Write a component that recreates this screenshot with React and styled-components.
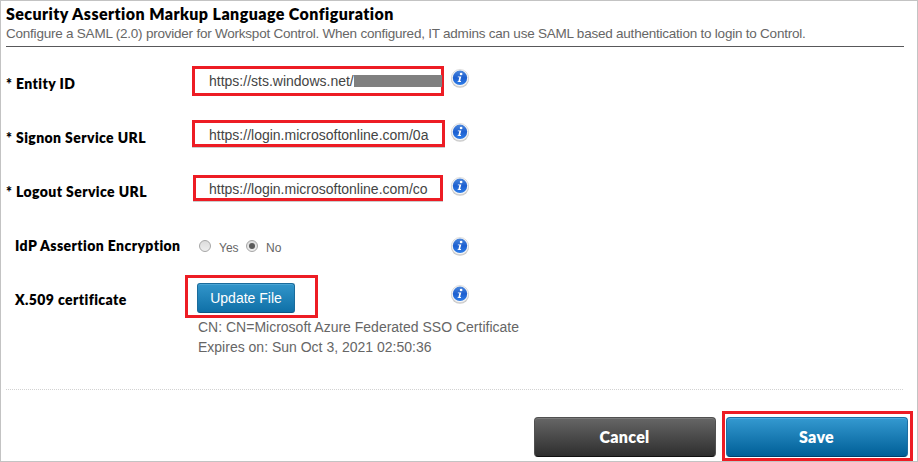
import React from "react";
import styled, { createGlobalStyle, css } from "styled-components";

const GlobalStyle = createGlobalStyle`
  * { box-sizing: border-box; }
  body { margin: 0; background: #fff; }
`;

const heading = css`
  font-family: Lato, "Open Sans", sans-serif;
  font-weight: 800;
  color: #000;
  white-space: nowrap;
`;
const body = css`
  font-family: "Liberation Sans", Arial, sans-serif;
  white-space: nowrap;
`;

const Panel = styled.main`
  width: 918px;
  height: 462px;
  border: 1px solid #c3c3c3;
  padding-left: 5px;
  overflow: hidden;
  background: #fff;
`;
const Header = styled.header`
  width: 898px;
  height: 46px;
  padding-top: 3px;
  border-bottom: 1px solid #58585a;
`;
const Title = styled.h1`
  ${heading}
  margin: 0;
  font-size: 16px;
  line-height: 20px;
  letter-spacing: 0.42px;
`;
const Subtitle = styled.p`
  ${body}
  margin: 0;
  font-size: 13.5px;
  line-height: 19px;
  letter-spacing: -0.225px;
  color: #666;
`;
const Form = styled.form`
  padding-top: 9px;
  height: 342px;
`;
const Row = styled.div`
  display: grid;
  grid-template-columns: 179px 265px 20px;
  height: ${(p) => p.$height || 54}px;
`;
const Label = styled.label`
  ${heading}
  font-size: 14px;
  line-height: 54px;
  padding-top: 1px;
  letter-spacing: 0.4px;
  padding-left: ${(p) => (p.$indent ? 9 : 0)}px;
`;
const InfoCell = styled.div`
  padding-top: ${(p) => p.$top}px;
  height: 40px;
`;
const Highlight = styled.div`
  border: 3px solid #ed1c24;
  width: ${(p) => p.$width}px;
  height: ${(p) => p.$height}px;
  margin: ${(p) => p.$top}px 0 0 ${(p) => p.$left}px;
`;
const Value = styled(Highlight)`
  ${body}
  display: flex;
  align-items: center;
  font-size: 14px;
  line-height: 20px;
  color: #444;
  padding-top: ${(p) => (p.$shadow ? 2 : 0)}px;
  padding-left: ${(p) => 14 - (p.$left - 7)}px;
  box-shadow: ${(p) => (p.$shadow ? "0 1px 0 #ccc" : "none")};
`;
const Redacted = styled.span`
  flex: 1;
  height: 12px;
  margin-right: -1px;
  background: #808080;
`;
const Radios = styled.div`
  ${body}
  display: flex;
  align-items: center;
  height: 56px;
  padding-left: 14px;
  font-size: 12px;
  color: #666;
`;
const Radio = styled.span`
  display: flex;
  align-items: center;
  justify-content: center;
  width: 12px;
  height: 12px;
  border: 1px solid #a6a6a6;
  border-radius: 50%;
  background: linear-gradient(#dcdcdc, #eee);
  &::after {
    content: "";
    width: 6px;
    height: 6px;
    border-radius: 50%;
    background: ${(p) => (p.$on ? "#5a5a5a" : "transparent")};
  }
`;
const RadioText = styled.span`
  width: ${(p) => p.$width}px;
  padding: 3px 0 0 8px;
`;
const UpdateButton = styled.button`
  ${body}
  display: block;
  margin: 5px 0 0 9px;
  padding: 0;
  width: 98px;
  height: 30px;
  border: 1px solid #1a6c9c;
  border-bottom-color: #0c5785;
  border-radius: 3px;
  background: linear-gradient(#3295ca, #0f70a7);
  box-shadow: inset 0 1px 0 #4ba5d4;
  color: #fff;
  font-size: 14px;
`;
const Details = styled.div`
  ${body}
  padding: 0 0 0 192px;
  font-size: 14px;
  line-height: 20px;
  color: #666;
`;
const DetailLine = styled.div``;
const Divider = styled.div`
  width: 898px;
  height: 1px;
  background: repeating-linear-gradient(90deg, #d2d2d2 0 1px, #fff 1px 2px);
`;
const Actions = styled.footer`
  display: flex;
  justify-content: flex-end;
  align-items: flex-start;
  gap: 6px;
  padding: 21px 4px 0 0;
`;
const ActionButton = styled.button`
  ${heading}
  display: block;
  width: 182px;
  height: 40px;
  margin: ${(p) => (p.$primary ? "3px 0 0 1px" : "6px 0 0")};
  padding: 0 1px 1px 0;
  color: #fff;
  font-size: 16px;
  letter-spacing: 0.3px;
  border: 1px solid ${(p) => (p.$primary ? "#1c6fa3" : "#505050")};
  border-bottom-color: ${(p) => (p.$primary ? "#003f6b" : "#111")};
  border-radius: 4px;
  background: ${(p) =>
    p.$primary
      ? "linear-gradient(#3499d0, #005f97)"
      : "linear-gradient(#666, #2e2e2e)"};
  box-shadow: inset 0 1px 0 ${(p) => (p.$primary ? "#4eabdc" : "#7a7a7a")};
`;

const InfoSvg = styled.svg`
  display: block;
`;
const InfoIcon = ({ id }) => (
  <InfoSvg width="20" height="20" viewBox="0 0 20 20">
    <defs>
      <linearGradient id={id} x2="0" y2="1">
        <stop stopColor="#4a86dc" />
        <stop offset=".5" stopColor="#1d5fcf" />
        <stop offset="1" stopColor="#2e7de8" />
      </linearGradient>
    </defs>
    <circle cx="10" cy="10.8" r="9" fill="#666" opacity=".35" />
    <circle cx="10" cy="10" r="8.6" fill="#f7f7f7" stroke="#d0d0d0" strokeWidth=".6" />
    <circle cx="10" cy="9.8" r="7.2" fill={`url(#${id})`} />
    <circle cx="11.1" cy="6" r="1.35" fill="#fff" />
    <path d="M7.9 8.4h3.4l-1.2 4.7h1l-.2 1H7.5l.2-.9h.7l.9-3.9H7.7z" fill="#fff" />
  </InfoSvg>
);

export default function App() {
  return (
    <>
      <GlobalStyle />
      <Panel>
        <Header>
          <Title>Security Assertion Markup Language Configuration</Title>
          <Subtitle>
            Configure a SAML (2.0) provider for Workspot Control. When configured, IT admins can use SAML based authentication to login to Control.
          </Subtitle>
        </Header>
        <Form onSubmit={(e) => e.preventDefault()}>
          <Row>
            <Label>* Entity ID</Label>
            <Value $left={7} $top={10} $width={252} $height={30}>
              https://sts.windows.net/
              <Redacted />
            </Value>
            <InfoCell $top={12}><InfoIcon id="info-entity" /></InfoCell>
          </Row>
          <Row>
            <Label>* Signon Service URL</Label>
            <Value $left={7} $top={10} $width={253} $height={27} $shadow>
              https://login.microsoftonline.com/0a
            </Value>
            <InfoCell $top={12}><InfoIcon id="info-signon" /></InfoCell>
          </Row>
          <Row>
            <Label>* Logout Service URL</Label>
            <Value $left={8} $top={11} $width={250} $height={26} $shadow>
              https://login.microsoftonline.com/co
            </Value>
            <InfoCell $top={12}><InfoIcon id="info-logout" /></InfoCell>
          </Row>
          <Row>
            <Label $indent>IdP Assertion Encryption</Label>
            <Radios>
              <Radio />
              <RadioText $width={35}>Yes</RadioText>
              <Radio $on />
              <RadioText $width={35}>No</RadioText>
            </Radios>
            <InfoCell $top={18}><InfoIcon id="info-idp" /></InfoCell>
          </Row>
          <Row $height={45}>
            <Label $indent>X.509 certificate</Label>
            <Highlight $left={0} $top={3} $width={133} $height={43}>
              <UpdateButton type="button">Update File</UpdateButton>
            </Highlight>
            <InfoCell $top={12}><InfoIcon id="info-cert" /></InfoCell>
          </Row>
          <Details>
            <DetailLine>CN: CN=Microsoft Azure Federated SSO Certificate</DetailLine>
            <DetailLine>Expires on: Sun Oct 3, 2021 02:50:36</DetailLine>
          </Details>
        </Form>
        <Divider />
        <Actions>
          <ActionButton type="button">Cancel</ActionButton>
          <Highlight $left={0} $top={0} $width={191} $height={50}>
            <ActionButton type="button" $primary>Save</ActionButton>
          </Highlight>
        </Actions>
      </Panel>
    </>
  );
}
